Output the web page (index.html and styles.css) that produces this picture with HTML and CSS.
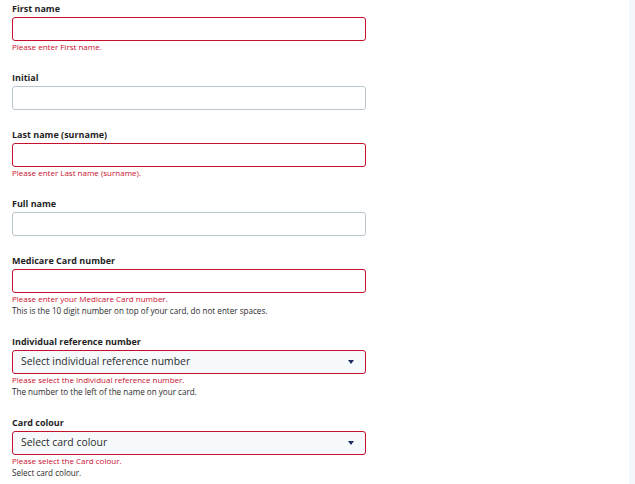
FILE: index.html
```html
<!DOCTYPE html>
<html lang="en">
<head>
    <meta charset="UTF-8">
    <meta name="viewport" content="width=device-width, initial-scale=1.0">
    <title>Your details</title>
    <link rel="stylesheet" href="styles.css">
</head>
<body>
    <div class="page">
        <form class="details-form">
            <div class="field">
                <label class="field-label" for="first-name">First name</label>
                <input class="text-input has-error" id="first-name" type="text">
                <div class="msg-error">Please enter First name.</div>
            </div>

            <div class="field">
                <label class="field-label" for="initial">Initial</label>
                <input class="text-input" id="initial" type="text">
            </div>

            <div class="field">
                <label class="field-label" for="last-name">Last name (surname)</label>
                <input class="text-input has-error" id="last-name" type="text">
                <div class="msg-error">Please enter Last name (surname).</div>
            </div>

            <div class="field">
                <label class="field-label" for="full-name">Full name</label>
                <input class="text-input" id="full-name" type="text">
            </div>

            <div class="field">
                <label class="field-label" for="medicare">Medicare Card number</label>
                <input class="text-input has-error" id="medicare" type="text">
                <div class="msg-error">Please enter your Medicare Card number.</div>
                <div class="msg-hint">This is the 10 digit number on top of your card, do not enter spaces.</div>
            </div>

            <div class="field">
                <label class="field-label" for="irn">Individual reference number</label>
                <div class="select-box has-error">
                    <select id="irn">
                        <option>Select individual reference number</option>
                    </select>
                    <span class="select-arrow"></span>
                </div>
                <div class="msg-error">Please select the Individual reference number.</div>
                <div class="msg-hint">The number to the left of the name on your card.</div>
            </div>

            <div class="field">
                <label class="field-label" for="colour">Card colour</label>
                <div class="select-box has-error">
                    <select id="colour">
                        <option>Select card colour</option>
                    </select>
                    <span class="select-arrow"></span>
                </div>
                <div class="msg-error">Please select the Card colour.</div>
                <div class="msg-hint">Select card colour.</div>
            </div>
        </form>
        <div class="side-strip"></div>
    </div>
</body>
</html>
```

FILE: styles.css
```css
html, body {
    margin: 0;
    padding: 0;
    height: 100%;
    overflow: hidden;
}
body {
    font-family: "Open Sans", "Liberation Sans", Arial, sans-serif;
    color: #1f1f1f;
    background: #fff;
}
.page {
    display: flex;
    height: 100%;
}
.details-form {
    flex: 1;
    padding: 3px 0 0 12px;
}
.side-strip {
    width: 6px;
    background: #f3f6fa;
}
.field {
    width: 354px;
    margin-bottom: 19px;
}
.field-label {
    display: block;
    font-size: 9px;
    font-weight: 700;
    line-height: 12px;
    margin-bottom: 2px;
    color: #1f1f1f;
}
.text-input {
    display: block;
    box-sizing: border-box;
    width: 100%;
    height: 24px;
    margin: 0;
    border: 1px solid #b9c6ce;
    border-radius: 3px;
    background: #fff;
}
.has-error {
    border: 1px solid #c8102e;
}
.select-box {
    position: relative;
    box-sizing: border-box;
    height: 24px;
    border-radius: 3px;
    background: #f6f9fc;
}
.select-box select {
    appearance: none;
    -webkit-appearance: none;
    display: block;
    box-sizing: border-box;
    width: 100%;
    height: 19px;
    border: none;
    background: transparent;
    padding: 0 0 0 8px;
    font-family: inherit;
    font-size: 10.4px;
    color: #2b2b2b;
}
.select-arrow {
    position: absolute;
    right: 11px;
    top: 9px;
    border-left: 3px solid transparent;
    border-right: 3px solid transparent;
    border-top: 4px solid #1b2f5c;
}
.msg-error {
    font-size: 8px;
    line-height: 12px;
    color: #c8102e;
}
.msg-hint {
    font-size: 8.1px;
    line-height: 12px;
    color: #2b2b2b;
}
```
